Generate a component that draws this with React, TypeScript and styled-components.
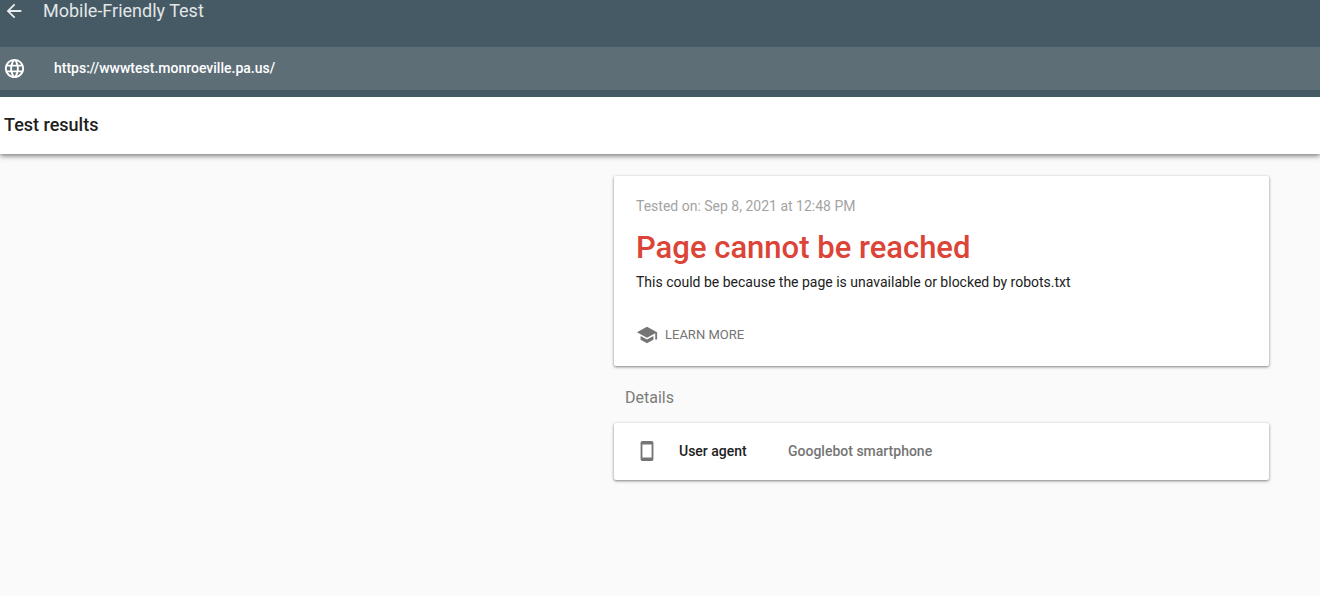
import React from "react";
import styled, { createGlobalStyle } from "styled-components";

const GlobalStyle = createGlobalStyle`
  *, *::before, *::after { box-sizing: border-box; }
  body {
    margin: 0;
    background: #fafafa;
    color: #212121;
    font-family: Roboto, "Liberation Sans", sans-serif;
    font-size: 14px;
    line-height: 20px;
  }
  h1, h2, h3, p, dl, dt, dd { margin: 0; }
`;

const Page = styled.div`
  min-height: 100vh;
`;

const Header = styled.header`
  background: #455a64;
  padding-bottom: 7px;
`;

const TitleBar = styled.div`
  display: flex;
  align-items: center;
  gap: 18px;
  height: 47px;
  padding: 0 3px 25px;
`;

const IconButton = styled.button`
  display: flex;
  padding: 0;
  border: 0;
  background: none;
  color: #e9ecee;
  cursor: pointer;
`;

const AppTitle = styled.h1`
  color: #e2e6e8;
  font-size: 18px;
  font-weight: 400;
  line-height: 22px;
`;

const UrlBar = styled.label`
  display: flex;
  align-items: center;
  gap: 28px;
  height: 43px;
  padding: 0 3px 1px;
  background: #5d6e77;
  color: #fff;
`;

const UrlInput = styled.input`
  flex: 1;
  min-width: 0;
  padding: 0;
  border: 0;
  outline: 0;
  background: none;
  color: #fff;
  font: 500 14px/20px Roboto, "Liberation Sans", sans-serif;
`;

const ResultsBar = styled.div`
  display: flex;
  align-items: center;
  height: 57px;
  padding: 0 4px 1px;
  background: #fff;
  box-shadow: 0 2px 5px rgba(0, 0, 0, 0.5);
  clip-path: inset(0 0 -10px);
`;

const ResultsTitle = styled.h2`
  font-size: 18px;
  font-weight: 500;
  line-height: 24px;
`;

const Main = styled.main`
  display: grid;
  grid-template-columns: minmax(0, 614fr) minmax(0, 655fr);
  padding: 22px 51px 22px 0;
`;

const Results = styled.div`
  grid-column: 2;
`;

const Card = styled.section`
  padding: 20px 22px;
  border-radius: 2px;
  background: #fff;
  box-shadow: 0 1px 3px rgba(0, 0, 0, 0.5);
`;

const TestedOn = styled.p`
  color: #a3a3a3;
`;

const Verdict = styled.h2`
  margin: 12px 0 4px;
  color: #db4437;
  font-size: 31px;
  font-weight: 500;
  line-height: 40px;
`;

const LearnMore = styled.a`
  display: inline-flex;
  align-items: center;
  gap: 7px;
  margin-top: 32px;
  color: #757575;
  font-size: 13px;
  line-height: 22px;
  text-decoration: none;
  text-transform: uppercase;
  vertical-align: top;
`;

const SectionTitle = styled.h3`
  padding: 21px 11px 14px;
  color: #7c7c7c;
  font-size: 16px;
  font-weight: 400;
  line-height: 22px;
`;

const DetailCard = styled(Card)`
  padding: 17px 22px 18px;
`;

const DetailRow = styled.dl`
  display: flex;
  align-items: center;
  color: #757575;
  font-weight: 500;
  line-height: 22px;
`;

const DetailName = styled.dt`
  display: flex;
  align-items: center;
  gap: 21px;
  width: 152px;
`;

const NameText = styled.span`
  color: #212121;
`;

const Svg = styled.svg<{ $size: number }>`
  flex: none;
  width: ${(p) => p.$size}px;
  height: ${(p) => p.$size}px;
  fill: currentColor;
`;

const paths = {
  back: "M20 11H7.83l5.59-5.59L12 4l-8 8 8 8 1.41-1.41L7.83 13H20v-2z",
  globe:
    "M11.99 2C6.47 2 2 6.48 2 12s4.47 10 9.99 10C17.52 22 22 17.52 22 12S17.52 2 11.99 2zm6.93 6h-2.95c-.32-1.25-.78-2.45-1.38-3.56 1.84.63 3.37 1.91 4.33 3.56zM12 4.04c.83 1.2 1.48 2.53 1.91 3.96h-3.82c.43-1.43 1.08-2.76 1.91-3.96zM4.26 14C4.1 13.36 4 12.69 4 12s.1-1.36.26-2h3.38c-.08.66-.14 1.32-.14 2s.06 1.34.14 2H4.26zm.82 2h2.95c.32 1.25.78 2.45 1.38 3.56-1.84-.63-3.37-1.9-4.33-3.56zm2.95-8H5.08c.96-1.66 2.49-2.93 4.33-3.56C8.81 5.55 8.35 6.75 8.03 8zM12 19.96c-.83-1.2-1.48-2.53-1.91-3.96h3.82c-.43 1.43-1.08 2.76-1.91 3.96zM14.34 14H9.66c-.09-.66-.16-1.32-.16-2s.07-1.35.16-2h4.68c.09.65.16 1.32.16 2s-.07 1.34-.16 2zm.25 5.56c.6-1.11 1.06-2.31 1.38-3.56h2.95c-.96 1.65-2.49 2.93-4.33 3.56zM16.36 14c.08-.66.14-1.32.14-2s-.06-1.34-.14-2h3.38c.16.64.26 1.31.26 2s-.1 1.36-.26 2h-3.38z",
  school: "M5 13.18v4L12 21l7-3.82v-4L12 17l-7-3.82zM12 3L1 9l11 6 9-4.91V17h2V9L12 3z",
  phone:
    "M17 1.01L7 1c-1.1 0-1.99.9-1.99 2v18c0 1.1.89 2 1.99 2h10c1.1 0 2-.9 2-2V3c0-1.1-.9-1.99-2-1.99zM17 19H7V5h10v14z",
};

function Icon({ name, size = 22 }: { name: keyof typeof paths; size?: number }) {
  return (
    <Svg $size={size} viewBox="0 0 24 24" aria-hidden="true">
      <path d={paths[name]} />
    </Svg>
  );
}

export default function App() {
  return (
    <Page>
      <GlobalStyle />
      <Header>
        <TitleBar>
          <IconButton type="button" aria-label="Back">
            <Icon name="back" />
          </IconButton>
          <AppTitle>Mobile-Friendly Test</AppTitle>
        </TitleBar>
        <UrlBar>
          <Icon name="globe" size={23} />
          <UrlInput type="text" aria-label="URL" defaultValue="https://wwwtest.monroeville.pa.us/" />
        </UrlBar>
      </Header>
      <ResultsBar>
        <ResultsTitle>Test results</ResultsTitle>
      </ResultsBar>
      <Main>
        <Results>
          <Card>
            <TestedOn>Tested on: Sep 8, 2021 at 12:48 PM</TestedOn>
            <Verdict>Page cannot be reached</Verdict>
            <p>This could be because the page is unavailable or blocked by robots.txt</p>
            <LearnMore href="#learn-more">
              <Icon name="school" />
              Learn more
            </LearnMore>
          </Card>
          <SectionTitle>Details</SectionTitle>
          <DetailCard>
            <DetailRow>
              <DetailName>
                <Icon name="phone" />
                <NameText>User agent</NameText>
              </DetailName>
              <dd>Googlebot smartphone</dd>
            </DetailRow>
          </DetailCard>
        </Results>
      </Main>
    </Page>
  );
}
